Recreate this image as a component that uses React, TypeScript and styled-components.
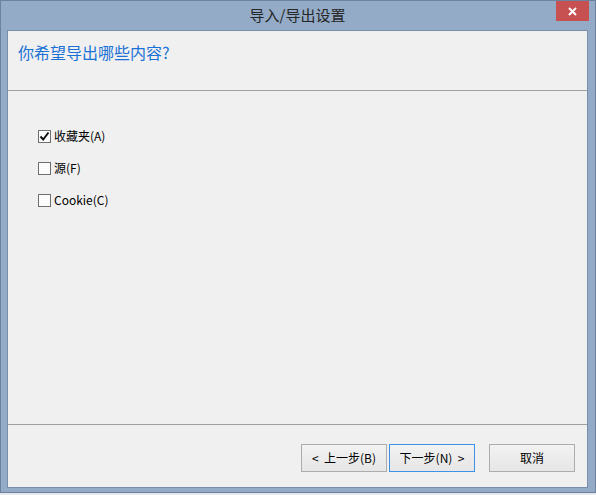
import React from "react";
import styled, { createGlobalStyle } from "styled-components";

const Global = createGlobalStyle`
  html, body { margin: 0; padding: 0; }
  body {
    background: #e6e8ec;
    font-family: "Noto Sans CJK SC", "Noto Sans", sans-serif;
    width: 596px;
    height: 495px;
    overflow: hidden;
  }
`;

const Window = styled.div`
  position: relative;
  box-sizing: border-box;
  width: 596px;
  height: 493px;
  background: #93abc6;
  border: 1px solid #6d829f;
  display: flex;
  flex-direction: column;
  padding: 0 7px 4px 6px;
`;

const TitleBar = styled.div`
  height: 29px;
  display: flex;
  align-items: center;
  justify-content: center;
  font-size: 15px;
  color: #262626;
  line-height: 20px;
  padding-bottom: 1px;
  box-sizing: border-box;
`;

const CloseButton = styled.div`
  position: absolute;
  left: 555px;
  top: 0;
  width: 33px;
  height: 20px;
  background: #c75050;
  display: flex;
  align-items: center;
  justify-content: center;
`;

const Panel = styled.div`
  flex: 1;
  background: #f0f0f0;
  border: 1px solid #7a8eaa;
  display: flex;
  flex-direction: column;
  min-height: 0;
`;

const Header = styled.div`
  height: 60px;
  box-sizing: border-box;
  padding: 10px 0 0 10px;
  border-bottom: 1px solid #a0a0a0;
`;

const Heading = styled.div`
  font-size: 16px;
  line-height: 22px;
  color: #1b72d6;
`;

const Body = styled.div`
  flex: 1;
  padding: 38px 0 0 30px;
  display: flex;
  flex-direction: column;
  gap: 18px;
`;

const Row = styled.label`
  display: flex;
  align-items: center;
  gap: 3px;
  height: 14px;
  font-size: 12px;
  color: #000;
`;

const Box = styled.span`
  box-sizing: border-box;
  width: 13px;
  height: 13px;
  border: 1px solid #6f6f6f;
  background: #fcfcfc;
  display: flex;
  align-items: center;
  justify-content: center;
`;

const Label = styled.span`
  line-height: 14px;
`;

const Footer = styled.div`
  height: 63px;
  box-sizing: border-box;
  border-top: 1px solid #a0a0a0;
  display: flex;
  justify-content: flex-end;
  align-items: flex-start;
  padding: 19px 12px 0 0;
`;

const Button = styled.div<{ $focus?: boolean; $gap?: number }>`
  box-sizing: border-box;
  width: 86px;
  height: 28px;
  margin-left: ${(p) => p.$gap ?? 0}px;
  border: 1px solid ${(p) => (p.$focus ? "#3c92e6" : "#adadad")};
  background: linear-gradient(#f2f2f2, #e6e6e6);
  display: flex;
  align-items: center;
  justify-content: center;
  font-size: 12px;
  color: #000;
  line-height: 14px;
  white-space: pre;
`;

const Check = () => (
  <svg width="11" height="11" viewBox="0 0 11 11">
    <path d="M1.5 5.5 L4.2 8.5 L9.5 1.5" fill="none" stroke="#111" strokeWidth="2" />
  </svg>
);

const XIcon = () => (
  <svg width="9" height="9" viewBox="0 0 9 9">
    <path d="M1 1 L8 8 M8 1 L1 8" stroke="#fff" strokeWidth="2" />
  </svg>
);

const items = [
  { label: "收藏夹(A)", checked: true },
  { label: "源(F)", checked: false },
  { label: "Cookie(C)", checked: false },
];

export default function App() {
  return (
    <>
      <Global />
      <Window>
        <TitleBar>导入/导出设置</TitleBar>
        <CloseButton>
          <XIcon />
        </CloseButton>
        <Panel>
          <Header>
            <Heading>你希望导出哪些内容?</Heading>
          </Header>
          <Body>
            {items.map((it) => (
              <Row key={it.label}>
                <Box>{it.checked && <Check />}</Box>
                <Label>{it.label}</Label>
              </Row>
            ))}
          </Body>
          <Footer>
            <Button>{"<  上一步(B)"}</Button>
            <Button $focus $gap={2}>{"下一步(N)  >"}</Button>
            <Button $gap={14}>取消</Button>
          </Footer>
        </Panel>
      </Window>
    </>
  );
}
